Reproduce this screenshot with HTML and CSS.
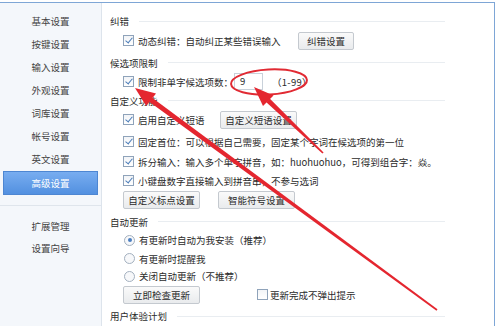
FILE: index.html
```html
<!DOCTYPE html>
<html lang="zh-CN">
<head>
    <meta charset="UTF-8">
    <title>高级设置</title>
    <link rel="stylesheet" href="styles.css">
</head>
<body>
    <div class="window">
        <aside class="side">
            <div class="nav-item">基本设置</div>
            <div class="nav-item">按键设置</div>
            <div class="nav-item">输入设置</div>
            <div class="nav-item">外观设置</div>
            <div class="nav-item">词库设置</div>
            <div class="nav-item">帐号设置</div>
            <div class="nav-item">英文设置</div>
            <div class="nav-item active">高级设置</div>
            <div class="side-sep"></div>
            <div class="nav-item lower first-lower">扩展管理</div>
            <div class="nav-item lower">设置向导</div>
        </aside>

        <main class="panel">
            <div class="title"><span>纠错</span><i></i></div>
            <div class="row tall">
                <span class="cb on"></span>
                <span class="label w-174">动态纠错：自动纠正某些错误输入</span>
                <span class="btn small">纠错设置</span>
            </div>

            <div class="title tall gap2"><span>候选项限制</span><i></i></div>
            <div class="row">
                <span class="cb on"></span>
                <span class="label w-110">限制非单字候选项数：</span>
                <span class="num">9</span>
                <span class="range">（1-99）</span>
            </div>

            <div class="title"><span>自定义功能</span><i></i></div>
            <div class="row tall">
                <span class="cb on"></span>
                <span class="label w-95">启用自定义短语</span>
                <span class="btn">自定义短语设置</span>
            </div>
            <div class="row tall gap2">
                <span class="cb on"></span>
                <span class="label">固定首位：可以根据自己需要，固定某个字词在候选项的第一位</span>
            </div>
            <div class="row tall">
                <span class="cb on"></span>
                <span class="label">拆分输入：输入多个单字拼音，如：huohuohuo，可得到组合字：焱。</span>
            </div>
            <div class="row">
                <span class="cb on"></span>
                <span class="label">小键盘数字直接输入到拼音串，不参与选词</span>
            </div>
            <div class="row">
                <span class="btn">自定义标点设置</span>
                <span class="btn next">智能符号设置</span>
            </div>

            <div class="title gap3"><span>自动更新</span><i></i></div>
            <div class="row">
                <span class="radio on"></span>
                <span class="label">有更新时自动为我安装（推荐）</span>
            </div>
            <div class="row short">
                <span class="radio"></span>
                <span class="label">有更新时提醒我</span>
            </div>
            <div class="row short">
                <span class="radio"></span>
                <span class="label">关闭自动更新（不推荐）</span>
            </div>
            <div class="row">
                <span class="btn">立即检查更新</span>
                <span class="cb far"></span>
                <span class="label">更新完成不弹出提示</span>
            </div>

            <div class="title tall gap2"><span>用户体验计划</span><i></i></div>
        </main>
    </div>

    <!-- red marks drawn over the screenshot -->
    <svg class="marks" width="499" height="326" viewBox="0 0 499 326">
        <ellipse cx="269" cy="82" rx="38" ry="12.5" fill="none" stroke="#e12a33" stroke-width="2" transform="rotate(-3 269 82)"/>
        <polygon points="135,88 146.2,106 156,93.5" fill="#e4262f"/>
        <polygon points="149.2,101.8 152.2,97.7 437.5,309.3 436.5,310.7" fill="#e4262f"/>
        <polygon points="254,87 263,106 273.5,95.5" fill="#e4262f"/>
        <polygon points="266.3,102.2 269.7,98.6 323.6,152.4 322.4,153.6" fill="#e4262f"/>
    </svg>
</body>
</html>
```

FILE: styles.css
```css
body {
    margin: 0;
    position: relative;
    width: 499px;
    height: 326px;
    overflow: hidden;
    background: #ffffff;
    font-family: "Noto Sans CJK SC", "Noto Sans", sans-serif;
    font-size: 9.5px;
    color: #2b2b2b;
}

.window {
    display: flex;
    margin-top: 2px;
    width: 495px;
    height: 324px;
    box-sizing: border-box;
    border-top: 1px solid #7ea6d6;
    border-right: 1px solid #7ea6d6;
}

/* left menu */
.side {
    width: 102px;
    flex: none;
    box-sizing: border-box;
    padding-top: 7px;
    background: #f4f7fb;
    border-right: 1px solid #dde4ec;
}

.nav-item {
    height: 23px;
    line-height: 23px;
    text-align: center;
    color: #444444;
}

.nav-item.active {
    margin: 0 3px;
    height: 22px;
    line-height: 22px;
    color: #ffffff;
    background: linear-gradient(#78adf0, #5290e0);
    border: 1px solid #4d86d2;
}

.side-sep {
    margin-top: 10px;
    height: 1px;
    background: #dfe5ec;
}

.nav-item.lower {
    height: 22px;
    line-height: 22px;
}

.nav-item.first-lower {
    margin-top: 9px;
}

/* right panel */
.panel {
    flex: 1;
    display: flex;
    flex-direction: column;
    padding: 9px 0 0 8px;
    background: #ffffff;
}

.title {
    display: flex;
    align-items: center;
    height: 19px;
    width: 335px;
}

.title i {
    flex: 1;
    height: 1px;
    margin-left: 10px;
    background: #e9edf1;
}

.row {
    display: flex;
    align-items: center;
    height: 19px;
    padding-left: 13px;
    white-space: nowrap;
}

.tall {
    height: 20px;
}

.short {
    height: 18px;
}

.gap2 {
    margin-top: 2px;
}

.gap3 {
    margin-top: 3px;
}

.cb {
    position: relative;
    width: 9px;
    height: 9px;
    margin-right: 4px;
    flex: none;
    border: 1px solid #8fa3ba;
    background: linear-gradient(#f2f4f7, #ffffff);
}

.cb.on::after {
    content: "";
    position: absolute;
    left: 3px;
    top: 0px;
    width: 3px;
    height: 6px;
    border-right: 1.5px solid #4a7cb8;
    border-bottom: 1.5px solid #4a7cb8;
    transform: rotate(40deg);
}

.cb.far {
    margin-left: 57px;
    margin-right: 2px;
}

.radio {
    position: relative;
    width: 9px;
    height: 9px;
    margin: 0 4px 0 1px;
    flex: none;
    border: 1px solid #a3b0bf;
    border-radius: 50%;
    background: #f7f8fa;
}

.radio.on::after {
    content: "";
    position: absolute;
    left: 2.5px;
    top: 2.5px;
    width: 4px;
    height: 4px;
    border-radius: 50%;
    background: #4c7fc0;
}

.label {
    flex: none;
}

.w-174 {
    width: 160px;
}

.w-110 {
    width: 96px;
}

.w-95 {
    width: 82px;
}

.btn {
    display: flex;
    align-items: center;
    justify-content: center;
    width: 77px;
    height: 18px;
    box-sizing: border-box;
    flex: none;
    border: 1px solid #c4c9cf;
    border-radius: 2px;
    background: linear-gradient(#fafafa, #e9ebed);
}

.btn.small {
    width: 56px;
}

.btn.next {
    margin-left: 18px;
}

.num {
    width: 29px;
    height: 17px;
    box-sizing: border-box;
    padding-left: 5px;
    line-height: 15px;
    border: 1px solid #c9d1da;
    background: #ffffff;
}

.range {
    margin-left: 9px;
    letter-spacing: 0.3px;
}

.marks {
    position: absolute;
    left: 0;
    top: 0;
    pointer-events: none;
}
```
